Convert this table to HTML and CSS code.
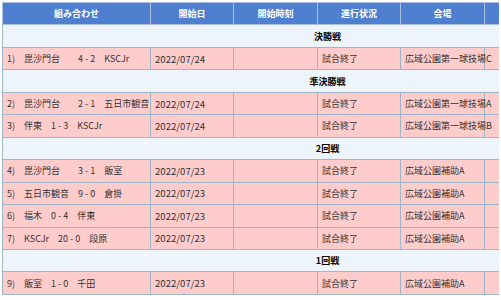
FILE: index.html
```html
<!DOCTYPE html>
<html lang="ja">
<head>
<meta charset="utf-8">
<link rel="stylesheet" href="styles.css">
</head>
<body>
<table class="results">
  <colgroup>
    <col class="c-match">
    <col class="c-date">
    <col class="c-time">
    <col class="c-status">
    <col class="c-venue">
    <col class="c-extra">
  </colgroup>
  <thead>
    <tr class="head">
      <th>組み合わせ</th>
      <th>開始日</th>
      <th>開始時刻</th>
      <th>進行状況</th>
      <th>会場</th>
      <th></th>
    </tr>
  </thead>
  <tbody>
    <tr class="round"><td colspan="6">決勝戦</td></tr>
    <tr class="game"><td>1)　毘沙門台　　4 - 2　KSCJr</td><td class="num">2022/07/24</td><td></td><td>試合終了</td><td>広域公園第一球技場C</td><td></td></tr>
    <tr class="round"><td colspan="6">準決勝戦</td></tr>
    <tr class="game"><td>2)　毘沙門台　　2 - 1　五日市観音</td><td class="num">2022/07/24</td><td></td><td>試合終了</td><td>広域公園第一球技場A</td><td></td></tr>
    <tr class="game"><td>3)　伴東　1 - 3　KSCJr</td><td class="num">2022/07/24</td><td></td><td>試合終了</td><td>広域公園第一球技場B</td><td></td></tr>
    <tr class="round"><td colspan="6">2回戦</td></tr>
    <tr class="game"><td>4)　毘沙門台　　3 - 1　飯室</td><td class="num">2022/07/23</td><td></td><td>試合終了</td><td>広域公園補助A</td><td></td></tr>
    <tr class="game"><td>5)　五日市観音　9 - 0　倉掛</td><td class="num">2022/07/23</td><td></td><td>試合終了</td><td>広域公園補助A</td><td></td></tr>
    <tr class="game"><td>6)　福木　0 - 4　伴東</td><td class="num">2022/07/23</td><td></td><td>試合終了</td><td>広域公園補助A</td><td></td></tr>
    <tr class="game"><td>7)　KSCJr　20 - 0　段原</td><td class="num">2022/07/23</td><td></td><td>試合終了</td><td>広域公園補助A</td><td></td></tr>
    <tr class="round"><td colspan="6">1回戦</td></tr>
    <tr class="game"><td>9)　飯室　1 - 0　千田</td><td class="num">2022/07/23</td><td></td><td>試合終了</td><td>広域公園補助A</td><td></td></tr>
  </tbody>
</table>
</body>
</html>
```
FILE: styles.css
```css
html, body {
  overflow: hidden;
}
body {
  margin: 2px;
  font-family: "Noto Sans CJK JP", "Noto Sans", sans-serif;
  font-size: 9px;
  color: #333;
  background: #fff;
}
.results {
  border-collapse: collapse;
  table-layout: fixed;
  width: 650px;
  border: 1px solid #9fb6c8;
}
.c-match { width: 148px; }
.c-date { width: 83px; }
.c-time { width: 84px; }
.c-status { width: 83px; }
.c-venue { width: 84px; }
.c-extra { width: 168px; }
.results th,
.results td {
  height: 21.46px;
  padding: 0 4px;
  white-space: nowrap;
  vertical-align: middle;
  text-align: left;
  border: 1px solid #9fb6c8;
}
.results td.num {
  font-size: 9.6px;
}
.head th {
  background: #4f7fd0;
  color: #fff;
  font-weight: bold;
  text-align: center;
  border-color: #a9bfdc;
}
.round td {
  background: #eef4fc;
  color: #000;
  font-weight: bold;
  text-align: center;
}
.game td {
  background: #ffcccc;
}
```
